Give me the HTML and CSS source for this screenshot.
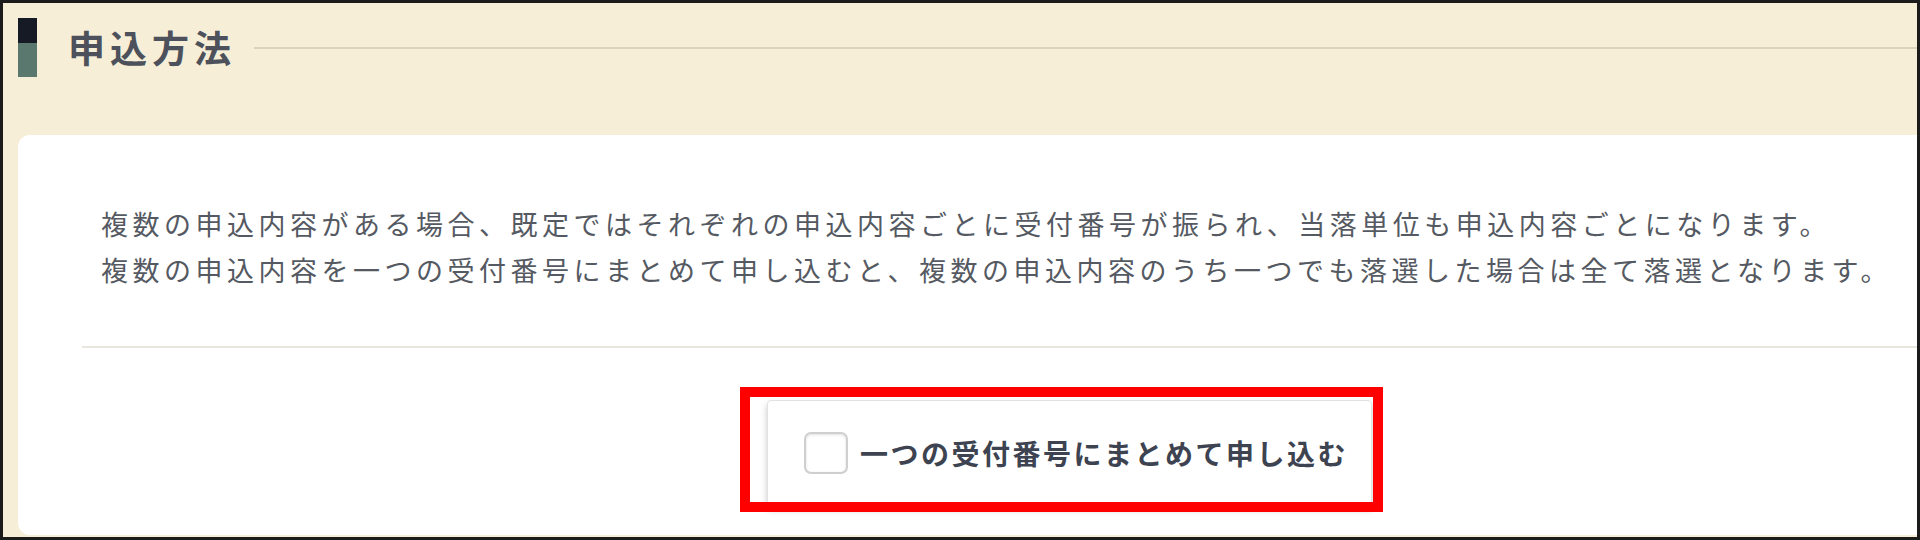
FILE: index.html
```html
<!DOCTYPE html>
<html lang="ja">
<head>
<meta charset="utf-8">
<link rel="stylesheet" href="styles.css">
</head>
<body>
<div class="frame">
  <div class="section-head">
    <div class="head-bar"><span class="bar-top"></span><span class="bar-bottom"></span></div>
    <h2 class="head-title">申込方法</h2>
    <div class="head-rule"></div>
  </div>
  <div class="panel">
    <p class="note">複数の申込内容がある場合、既定ではそれぞれの申込内容ごとに受付番号が振られ、当落単位も申込内容ごとになります。<br>複数の申込内容を一つの受付番号にまとめて申し込むと、複数の申込内容のうち一つでも落選した場合は全て落選となります。</p>
    <div class="divider"></div>
    <div class="option-row">
      <div class="option-wrap">
        <label class="option-card">
          <span class="checkbox"></span>
          <span class="option-label">一つの受付番号にまとめて申し込む</span>
        </label>
        <div class="highlight"></div>
      </div>
    </div>
  </div>
</div>
</body>
</html>
```
FILE: styles.css
```css
html, body {
  margin: 0;
  padding: 0;
}
body {
  width: 1920px;
  height: 540px;
  overflow: hidden;
  font-family: "Noto Sans CJK JP", "Noto Sans", sans-serif;
}
.frame {
  box-sizing: border-box;
  width: 1920px;
  height: 540px;
  border: 3px solid #1b1b1b;
  background: #f6eed6;
  padding: 15px 0 0 15px;
  overflow: hidden;
}
.section-head {
  display: flex;
  align-items: center;
  height: 59px;
}
.head-bar {
  display: flex;
  flex-direction: column;
  width: 19px;
  height: 59px;
  flex: none;
}
.bar-top {
  height: 25px;
  background: #151a24;
}
.bar-bottom {
  flex: 1;
  background: #5b786e;
}
.head-title {
  margin: 0 0 0 31px;
  font-size: 37px;
  font-weight: 700;
  letter-spacing: 5px;
  color: #4d515c;
  line-height: 59px;
}
.head-rule {
  flex: 1;
  height: 2px;
  margin-left: 18px;
  background: #dcd3b8;
}
.panel {
  margin-top: 58px;
  width: 2103px;
  height: 400px;
  background: #ffffff;
  border-radius: 12px;
  padding-top: 66px;
  box-sizing: border-box;
}
.note {
  margin: 0 0 0 83px;
  font-size: 27px;
  line-height: 46px;
  letter-spacing: 4.5px;
  color: #555962;
  white-space: nowrap;
}
.divider {
  height: 2px;
  margin: 53px 0 0 64px;
  background: #e9e5df;
}
.option-row {
  display: flex;
  justify-content: center;
  margin-top: 52px;
}
.option-wrap {
  position: relative;
}
.option-card {
  display: flex;
  align-items: center;
  gap: 12px;
  box-sizing: border-box;
  width: 605px;
  height: 106px;
  padding: 0 0 0 36px;
  background: #fff;
  border: 1px solid #e2e2e2;
  border-radius: 4px;
  box-shadow: 0 4px 6px rgba(0, 0, 0, 0.22);
}
.checkbox {
  box-sizing: border-box;
  width: 44px;
  height: 42px;
  border: 2px solid #cfcfcf;
  border-radius: 7px;
  background: #fff;
  box-shadow: inset 0 1px 3px rgba(0, 0, 0, 0.12);
  flex: none;
}
.option-label {
  font-size: 28px;
  font-weight: 700;
  letter-spacing: 2.5px;
  color: #3d4350;
  white-space: nowrap;
}
.highlight {
  position: absolute;
  left: -27px;
  top: -13px;
  width: 643px;
  height: 125px;
  box-sizing: border-box;
  border: 10px solid #ff0000;
}
```
